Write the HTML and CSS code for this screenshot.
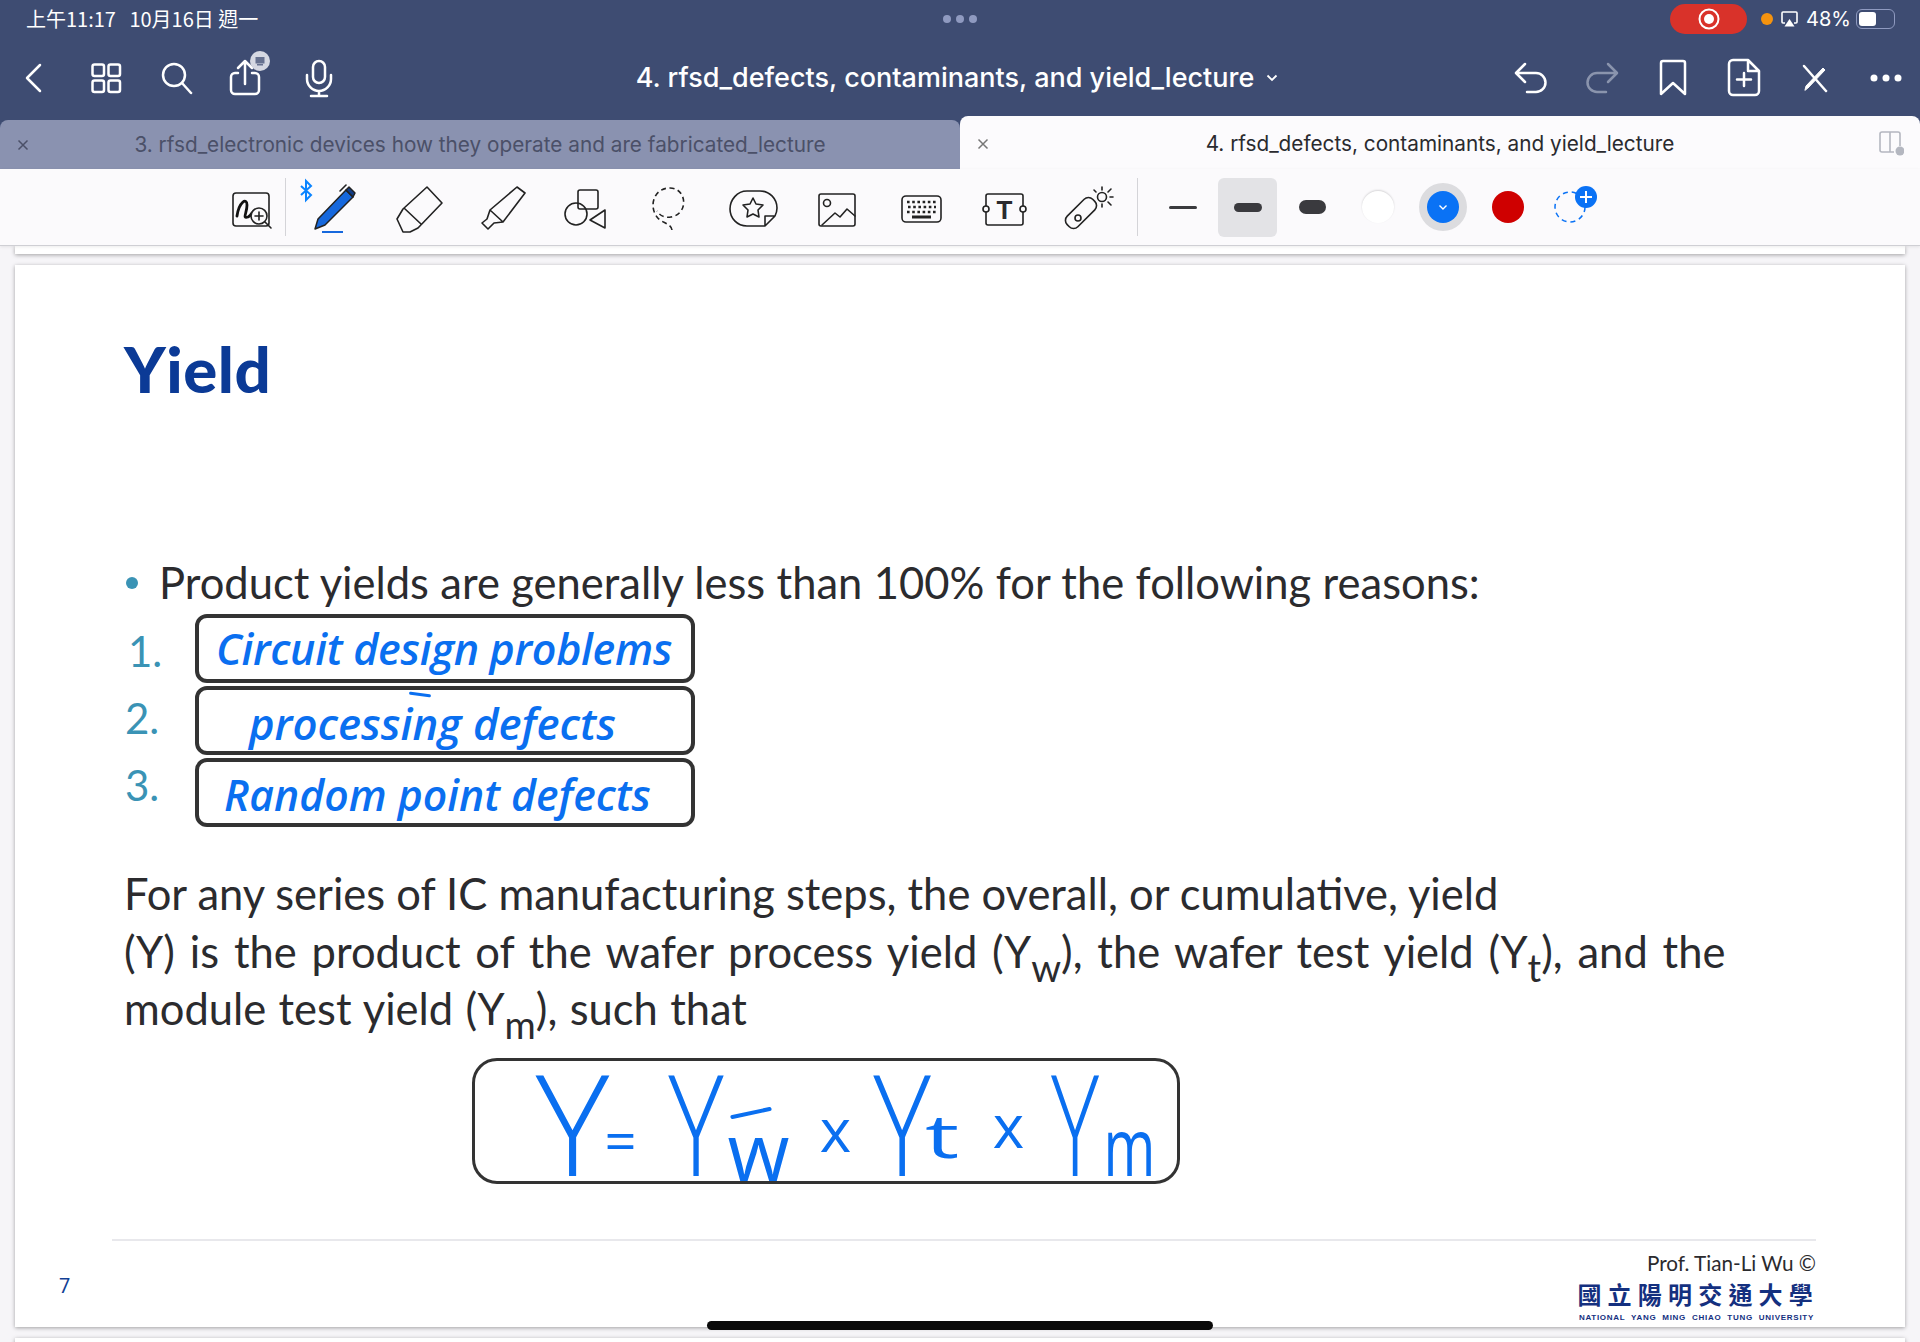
FILE: index.html
```html
<!DOCTYPE html>
<html lang="zh-Hant">
<head>
<meta charset="utf-8">
<title>rfsd_defects, contaminants, and yield_lecture</title>
<link rel="stylesheet" href="styles.css">
</head>
<body>
<div class="app">
  <header class="chrome">
    <div class="status">
      <div class="status-left">上午11:17&nbsp;&nbsp; 10月16日 週一</div>
      <div class="status-dots"><i></i><i></i><i></i></div>
      <div class="status-right">
        <div class="rec"><svg width="24" height="24" viewBox="0 0 24 24"><circle cx="12" cy="12" r="9.5" fill="none" stroke="#fff" stroke-width="2"/><circle cx="12" cy="12" r="5" fill="#fff"/></svg></div>
        <span class="orange"></span>
        <svg class="airplay" width="17" height="16" viewBox="0 0 17 16"><path d="M4 12H2a1 1 0 0 1-1-1V2a1 1 0 0 1 1-1h13a1 1 0 0 1 1 1v9a1 1 0 0 1-1 1h-2" fill="none" stroke="#fff" stroke-width="1.6"/><path d="M8.5 8l5 7.5h-10z" fill="#fff"/></svg>
        <span class="pct">48%</span>
        <span class="battery"><b></b></span>
      </div>
    </div>
    <nav class="nav">
      <div class="nav-group nav-left">
        <span class="nav-cell"><svg class="nav-ico" width="40" height="40" viewBox="0 0 40 40"><path d="M25 7L12 20l13 13"/></svg></span>
        <span class="nav-cell"><svg class="nav-ico" width="40" height="40" viewBox="0 0 40 40"><rect x="6.5" y="6.5" width="11.5" height="11.5" rx="2"/><rect x="22.5" y="6.5" width="11.5" height="11.5" rx="2"/><rect x="6.5" y="22.5" width="11.5" height="11.5" rx="2"/><rect x="22.5" y="22.5" width="11.5" height="11.5" rx="2"/></svg></span>
        <span class="nav-cell"><svg class="nav-ico" width="40" height="40" viewBox="0 0 40 40"><circle cx="17" cy="17" r="11"/><path d="M25 25l9 10"/></svg></span>
        <span class="nav-cell"><svg class="nav-ico" width="40" height="40" viewBox="0 0 40 40"><path d="M10 15H7a4 4 0 0 0-4 4v13a4 4 0 0 0 4 4h20a4 4 0 0 0 4-4V19a4 4 0 0 0-4-4h-3"/><path d="M17 26V4M10 10l7-7 7 7"/><circle class="badge" cx="32" cy="3" r="10"/><rect class="badge-in" x="27.500" y="-1" width="9" height="6.500"/><rect class="badge-in" x="29" y="6" width="6" height="1.500"/></svg></span>
        <span class="nav-cell"><svg class="nav-ico" width="40" height="40" viewBox="0 0 40 40"><rect x="14" y="3" width="12" height="22" rx="6"/><path d="M8 17v4a12 12 0 0 0 24 0v-4M20 33v5M12 38h16"/></svg></span>
      </div>
      <div class="doc-title">4. rfsd_defects, contaminants, and yield_lecture<svg class="title-chev" width="12" height="8" viewBox="0 0 12 8"><path d="M1.500 1.500L6 6l4.500-4.500"/></svg></div>
      <div class="nav-group nav-right">
        <span class="nav-cell"><svg class="nav-ico" width="40" height="40" viewBox="0 0 40 40"><path d="M14 6l-9 9 9 9M6 15h19a9.500 9.500 0 0 1 0 19h-9"/></svg></span>
        <span class="nav-cell"><svg class="nav-ico dim" width="40" height="40" viewBox="0 0 40 40"><path d="M26 6l9 9-9 9M34 15H15a9.500 9.500 0 0 0 0 19h9"/></svg></span>
        <span class="nav-cell"><svg class="nav-ico" width="40" height="40" viewBox="0 0 40 40"><path d="M10 3h20a2 2 0 0 1 2 2v31L20 25 8 36V5a2 2 0 0 1 2-2z"/></svg></span>
        <span class="nav-cell"><svg class="nav-ico" width="40" height="40" viewBox="0 0 40 40"><path d="M9 2h15l11 11v20a4 4 0 0 1-4 4H9a4 4 0 0 1-4-4V6a4 4 0 0 1 4-4zM24 2v11h11M20 15v13M13 21.500h14"/></svg></span>
        <span class="nav-cell"><svg class="nav-ico" width="40" height="40" viewBox="0 0 40 40"><path d="M9 8l22 25"/><path class="pen-fill" d="M10 32l1-4L28 10l2 2-17 18z"/></svg></span>
        <span class="nav-cell"><svg class="more" width="40" height="40" viewBox="0 0 40 40"><circle cx="8" cy="20" r="3.500"/><circle cx="20" cy="20" r="3.500"/><circle cx="32" cy="20" r="3.500"/></svg></span>
      </div>
    </nav>
    <div class="tabs">
      <div class="tab tab-off">
        <svg class="tab-x" width="14" height="14" viewBox="0 0 14 14"><path d="M2.500 2.500l9 9m0-9l-9 9"/></svg>
        <span class="tab-text">3. rfsd_electronic devices how they operate and are fabricated_lecture</span>
      </div>
      <div class="tab tab-on">
        <svg class="tab-x" width="14" height="14" viewBox="0 0 14 14"><path d="M2.500 2.500l9 9m0-9l-9 9"/></svg>
        <span class="tab-text">4. rfsd_defects, contaminants, and yield_lecture</span>
        <svg class="split" width="26" height="26" viewBox="0 0 26 26"><path d="M16 22H4a2 2 0 0 1-2-2V4a2 2 0 0 1 2-2h16a2 2 0 0 1 2 2v12M12 2v20" fill="none" stroke="#b4b7c0" stroke-width="1.600"/><circle cx="22" cy="21" r="4.500" fill="#b4b7c0"/></svg>
      </div>
    </div>
  </header>

  <div class="toolbar">
    <svg class="tool-first" width="57" height="77" viewBox="0 0 57 77">
      <g class="ln"><rect x="5" y="24" width="36" height="33" rx="3"/></g>
      <path class="doodle" d="M9 47c2-14 10-19 10-11s-5 14 1 12c4-2 4-6 7-6"/>
      <circle class="ln wfill" cx="31" cy="47" r="8"/>
      <path class="ln" d="M31 43v8M27 47h8M37 53l6 6"/>
    </svg>
    <span class="tool-sep"></span>
    <svg class="tool pen" width="84" height="77" viewBox="0 0 84 77">
      <path class="bt" d="M8 17l10 9-5 5V12l5 5-10 9"/>
      <path class="pen-body" d="M22 60l3-10 28-29 7 7-28 28z"/>
      <path class="pen-cap" d="M53 21l3-3 6 6-2 4z"/>
      <path class="ln" d="M47 22l6-6"/>
      <path class="pen-line" d="M29 63h21"/>
    </svg>
    <svg class="tool" width="84" height="77" viewBox="0 0 84 77"><path class="ln" d="M50 18l15 16-24 25-8 4h-7l-6-13 6-10zM27 39l17 16"/></svg>
    <svg class="tool" width="84" height="77" viewBox="0 0 84 77"><path class="ln" d="M56 18l8 6-22 29-13-12zM29 41l-3 9-5 4 6 6 6-6 9-1"/></svg>
    <svg class="tool" width="84" height="77" viewBox="0 0 84 77"><rect class="ln" x="33" y="21" width="20" height="19" rx="2"/><circle class="ln" cx="31" cy="45" r="11"/><path class="ln" d="M45 51l15-10v18z"/></svg>
    <svg class="tool" width="84" height="77" viewBox="0 0 84 77"><path class="ln dash" d="M43 61c-1-7-11-7-15-13-8-10-4-29 13-29s19 26 1 29c-6 1-11-1-14-6"/></svg>
    <svg class="tool" width="84" height="77" viewBox="0 0 84 77"><path class="ln" d="M34 22h13c10 0 17 8 17 17 0 3-1 6-2 8l-10 10H34c-10 0-17-8-17-17s7-18 17-18zM62 47H52v10"/><path class="ln" d="M40 29l3 6 7 1-5 5 1 7-6-3-6 3 1-7-5-5 7-1z"/></svg>
    <svg class="tool" width="84" height="77" viewBox="0 0 84 77"><rect class="ln" x="22" y="25" width="36" height="32" rx="2"/><circle class="ln" cx="30" cy="34" r="3.500"/><path class="ln" d="M25 56l13-12 5 4 7-8 8 7"/></svg>
    <svg class="tool" width="84" height="77" viewBox="0 0 84 77"><rect class="ln" x="21" y="27" width="39" height="26" rx="4"/><path class="keys" d="M26 33h30M27 38h28M26 43h30"/><path class="spacebar" d="M31 48h19"/></svg>
    <svg class="tool" width="84" height="77" viewBox="0 0 84 77"><rect class="ln" x="21" y="25" width="37" height="31" rx="2"/><circle class="ln wfill" cx="21" cy="40" r="3"/><circle class="ln wfill" cx="58" cy="40" r="3"/><text class="t-glyph" x="39.500" y="50" text-anchor="middle">T</text></svg>
    <svg class="tool" width="84" height="77" viewBox="0 0 84 77"><g transform="rotate(-45 32 44)"><rect class="ln" x="14" y="36.500" width="36" height="15" rx="6"/></g><circle class="ln" cx="29" cy="49" r="3"/><circle class="ln" cx="53" cy="28" r="4.500"/><path class="ln" d="M53 18v3M62 20l-3 3M64 28h-3M62 36l-3-3M53 38v-3M45 21l2 2"/></svg>
    <span class="tool-sep sep-two"></span>
    <span class="cell"><i class="lw lw-1"></i></span>
    <span class="cell"><span class="lw-on"><i class="lw lw-2"></i></span></span>
    <span class="cell"><i class="lw lw-3"></i></span>
    <span class="cell"><i class="sw sw-white"></i></span>
    <span class="cell"><span class="sw-ring"><i class="sw sw-blue"><svg width="10" height="7" viewBox="0 0 10 7"><path d="M1.500 1.500L5 5l3.500-3.500" fill="none" stroke="#fff" stroke-width="1.400"/></svg></i></span></span>
    <span class="cell"><i class="sw sw-red"></i></span>
    <span class="cell"><svg class="add-sw" width="50" height="50" viewBox="0 0 50 50"><circle cx="22" cy="25" r="15" fill="none" stroke="#0a72f5" stroke-width="1.500" stroke-dasharray="5 4"/><circle cx="38" cy="15" r="11" fill="#0a72f5"/><path d="M38 9v12M32 15h12" stroke="#fff" stroke-width="2"/></svg></span>
  </div>

  <main class="canvas">
    <div class="page page-prev"></div>
    <article class="page slide">
      <h1 class="slide-title">Yield</h1>
      <p class="lead"><i class="bullet"></i>Product yields are generally less than 100% for the following reasons:</p>
      <ol class="reasons">
        <li class="reason r1"><span class="num">1.</span><span class="ink-box"><span class="ink ink-1">Circuit design problems</span></span></li>
        <li class="reason r2"><span class="num">2.</span><span class="ink-box"><span class="ink ink-2">processing defects</span></span></li>
        <li class="reason r3"><span class="num">3.</span><span class="ink-box"><span class="ink ink-3">Random point defects</span></span></li>
      </ol>
      <p class="para"><span>For any series of IC manufacturing steps, the overall, or cumulative, yield</span><br>
      <span class="l2">(Y) is the product of the wafer process yield (Y<sub>w</sub>), the wafer test yield (Y<sub>t</sub>), and the</span><br>
      <span class="l3">module test yield (Y<sub>m</sub>), such that</span></p>
      <div class="formula">
        <span class="f-y f1">Y</span><span class="f-op f2">=</span><span class="f-y f3">Y</span><span class="f-sub f4">w</span><span class="f-op f5">x</span><span class="f-y f6">Y</span><span class="f-sub f7">t</span><span class="f-op f8">x</span><span class="f-y f9">Y</span><span class="f-sub f10">m</span>
      </div>
      <footer class="foot">
        <span class="page-no">7</span>
        <div class="credit">
          <div class="prof">Prof. Tian-Li Wu ©</div>
          <div class="uni-zh">國立陽明交通大學</div>
          <div class="uni-en">NATIONAL YANG MING CHIAO TUNG UNIVERSITY</div>
        </div>
      </footer>
    </article>
    <div class="page page-next"></div>
  </main>
  <div class="home-bar"></div>
</div>
</body>
</html>
```
FILE: styles.css
```css
*{box-sizing:border-box}
html,body{margin:0;padding:0}
body{width:1920px;height:1342px;overflow:hidden;font-family:"Inter","Roboto","Liberation Sans",sans-serif;background:#f6f5f8}
.app{position:relative;width:1920px;height:1342px;display:flex;flex-direction:column;overflow:hidden}

.chrome{background:#3e4c72;height:169px;display:flex;flex-direction:column;flex:none}
.status{height:38px;display:grid;grid-template-columns:1fr auto 1fr;align-items:center;color:#fff}
.status-left{padding-left:26px;font:400 20px "Noto Sans CJK TC","Roboto",sans-serif;margin-top:-2px}
.status-dots{display:flex;gap:5px}
.status-dots i{width:8px;height:8px;border-radius:50%;background:#8f9ac0}
.status-right{display:flex;align-items:center;justify-content:flex-end;padding-right:25px}
.rec{width:77px;height:30px;background:#d9322a;border-radius:15px;display:flex;align-items:center;justify-content:center;margin-right:14px}
.orange{width:12px;height:12px;border-radius:50%;background:#f5930f;margin-right:8px}
.airplay{margin-right:8px}
.pct{font-size:20px;margin-right:5px}
.battery{width:39px;height:20px;border:1.500px solid #8f9ac0;border-radius:6px;padding:2px;display:flex}
.battery b{width:17px;background:#fff;border-radius:3px}

.nav{height:77px;display:grid;grid-template-columns:1fr auto 1fr;align-items:center;color:#fff;padding-top:2px}
.nav-group{display:flex}
.nav-left{margin-left:-1px}
.nav-right{justify-content:flex-end;margin-right:-1px}
.nav-cell{width:71px;height:40px;display:flex;justify-content:center}
.nav-ico{fill:none;stroke:#fff;stroke-width:2.500;stroke-linecap:round;stroke-linejoin:round;overflow:visible}
.nav-ico.dim{stroke:#8a94ad}
.badge{fill:#d5d8e2;stroke:none}
.badge-in{fill:#66718f;stroke:none}
.pen-fill{fill:#fff;stroke:#fff;stroke-width:1}
.more{fill:#fff}
.doc-title{font-size:27px;font-weight:500;color:#fff;display:flex;align-items:center;white-space:nowrap;margin-left:-6px}
.title-chev{margin-left:12px;fill:none;stroke:#fff;stroke-width:1.800}

.tabs{flex:1;display:flex;align-items:flex-end}
.tab{width:960px;display:flex;align-items:center;justify-content:center;position:relative;font-size:20.750px;border-radius:8px 8px 0 0}
.tab-off{height:49px;background:#8a92b0;color:#4b5068}
.tab-on{height:53px;background:#fcfbfd;color:#2a2a2e;padding-top:2px}
.tab-x{fill:none;stroke-width:1.500;position:absolute;left:16px;top:18px}
.tab-off .tab-x{stroke:#4b5068}
.tab-on .tab-x{stroke:#777;top:21px}
.tab-text{white-space:nowrap}
.split{position:absolute;right:16px;top:14px}

.toolbar{height:77px;flex:none;background:#fbfafc;display:flex;padding-left:228px;border-bottom:1px solid #cfcfd4;box-shadow:0 1px 3px rgba(0,0,0,.08);position:relative}
.tool-first,.tool{flex:none;overflow:visible}
.tool-sep{width:1px;height:58px;margin:9px 7px 0 0;background:#d4d4d8;flex:none}
.sep-two{margin:9px 12px 0 4px}
.ln{fill:none;stroke:#222;stroke-width:1.600;stroke-linejoin:round;stroke-linecap:round}
.wfill{fill:#fbfafc}
.doodle{fill:none;stroke:#111;stroke-width:2.800;stroke-linecap:round}
.dash{stroke-dasharray:5 3.500;stroke-linecap:butt}
.bt{fill:none;stroke:#0a84ff;stroke-width:2}
.pen-body{fill:#1668dd;stroke:#222;stroke-width:1.500;stroke-linejoin:round}
.pen-cap{fill:#123d86;stroke:#222;stroke-width:1.500;stroke-linejoin:round}
.pen-line{fill:none;stroke:#1668dd;stroke-width:2}
.keys{fill:none;stroke:#222;stroke-width:2.600;stroke-dasharray:2.600 2.600}
.spacebar{fill:none;stroke:#222;stroke-width:3}
.t-glyph{font:700 26px "Liberation Sans",sans-serif;fill:#2a2a2e}
.cell{width:65px;height:76px;display:flex;align-items:center;justify-content:center;flex:none}
.lw{display:block;background:#3a3a3e;border-radius:7px}
.lw-1{width:28px;height:3px}
.lw-2{width:28px;height:9px}
.lw-3{width:27px;height:14px}
.lw-on{width:59px;height:59px;background:#e3e3e6;border-radius:6px;display:flex;align-items:center;justify-content:center}
.sw{display:flex;align-items:center;justify-content:center;width:32px;height:32px;border-radius:50%}
.sw-white{background:#fff;box-shadow:0 -1px 2px rgba(0,0,0,.15)}
.sw-ring{width:48px;height:48px;border-radius:50%;background:#dcdcdf;display:flex;align-items:center;justify-content:center}
.sw-blue{background:#0a72f5}
.sw-red{background:#cf0000}
.add-sw{overflow:visible}

.canvas{flex:1;display:flex;flex-direction:column;padding:0 15px;min-height:0}
.page{background:#fff;box-shadow:0 1px 4px rgba(0,0,0,.35);flex:none}
.page-prev{height:8px;margin-bottom:11px}
.page-next{height:10px;margin-top:11px}
.slide{height:1062px;display:flex;flex-direction:column;padding:0 89px 0 109px;font-family:"Lato","Open Sans",sans-serif;color:#2b2b2e}
.slide-title{margin:74px 0 0;font-size:63.500px;line-height:60px;font-weight:900;color:#0b3a96;letter-spacing:.5px;flex:none}
.lead{margin:158px 0 0;font-size:43.500px;line-height:50px;white-space:nowrap;position:relative;padding-left:35px;word-spacing:.3px;flex:none}
.bullet{position:absolute;left:2px;top:20px;width:12px;height:12px;border-radius:50%;background:#3a93b5}
.reasons{list-style:none;margin:7px 0 0;padding:0;display:flex;flex-direction:column;gap:3px;flex:none}
.reason{display:flex;height:69px;align-items:flex-start}
.num{width:71px;color:#3a93b5;font-size:42px;line-height:66px;padding-left:1px}
.r1 .num{padding-left:4px;padding-top:4px}
.r2 .num{line-height:64px}
.r3 .num{line-height:54px}
.ink-box{width:500px;height:100%;border:4px solid #333;border-radius:12px;display:flex;align-items:center;overflow:visible;white-space:nowrap;position:relative}
.ink{color:#0a6ff0;font-family:"Open Sans",sans-serif;font-style:italic;font-weight:600;display:block;font-size:43px}
.ink-1{margin-left:17px;letter-spacing:-.3px}
.ink-2{margin-left:50px;font-size:43.700px;padding-top:5px}
.ink-3{margin-left:25px;font-size:42.700px;padding-top:3px}
.r2 .ink-box::before{content:"";position:absolute;left:210px;top:3px;width:22px;height:3px;border-radius:2px;background:#0a6ff0;transform:rotate(8deg)}
.para{margin:38px 0 0;font-size:43.500px;line-height:57.500px;white-space:nowrap;flex:none}
.l2{word-spacing:3.700px}
.l3{word-spacing:1.200px}
.para sub{font-size:38px;line-height:0;vertical-align:-14px}
.formula{width:708px;height:126px;margin:20px 0 0 348px;border:3.500px solid #333;border-radius:25px;display:flex;align-items:baseline;padding:6px 0 0 57.500px;color:#0a6ff0;font-family:"Open Sans",sans-serif;overflow:visible;white-space:nowrap;flex:none}
.formula span{display:block;text-align:center;flex:none}
.f-y{font-size:140px;line-height:110px;font-weight:300;width:80px}
.f-op{font-weight:500;line-height:50px;font-size:60px;width:32px}
.f-sub{font-size:80px;font-weight:400;line-height:50px;position:relative}
.f2{font-size:56px;width:36px;margin-left:-10px;transform:translateY(-15px)}
.f3{margin-left:17px;transform:scaleX(.75)}
.f4{width:56px;margin-left:-8px;transform:translateY(5px)}
.f4::before{content:"";position:absolute;left:2px;top:-14px;width:42px;height:4px;border-radius:2px;background:#0a6ff0;transform:rotate(-12deg)}
.f5{margin-left:36px;transform:translateY(-24px)}
.f6{margin-left:10px;transform:scaleX(.78)}
.f7{width:30px;margin-left:-9px;font-size:60px;transform:translate(-6px,-18px) scaleX(1.6)}
.f8{margin-left:30px;transform:translateY(-28px)}
.f9{margin-left:10px;transform:scaleX(.65)}
.f10{width:56px;margin-left:-20px;transform:scaleX(.7)}
.foot{margin:55px 0 0 -12px;border-top:2px solid #e8e8ec;display:flex;justify-content:space-between;flex:1}
.page-no{color:#123f94;font-size:20px;margin:33px 0 0 -53px;font-family:"Roboto",sans-serif}
.credit{text-align:right;padding-top:9px}
.prof{font-size:20.700px;line-height:26px;color:#2b2b2e;margin-bottom:3px}
.uni-zh{font:700 24px/30px "Noto Sans CJK TC",sans-serif;color:#14307f;letter-spacing:6.200px;margin-right:-3px}
.uni-en{font:700 8px/11px "Liberation Sans",sans-serif;color:#14307f;letter-spacing:.72px;word-spacing:3px;margin:3px 2px 0 0}

.home-bar{position:absolute;left:707px;top:1321px;width:506px;height:9px;background:#0a0a0a;border-radius:5px}
```
